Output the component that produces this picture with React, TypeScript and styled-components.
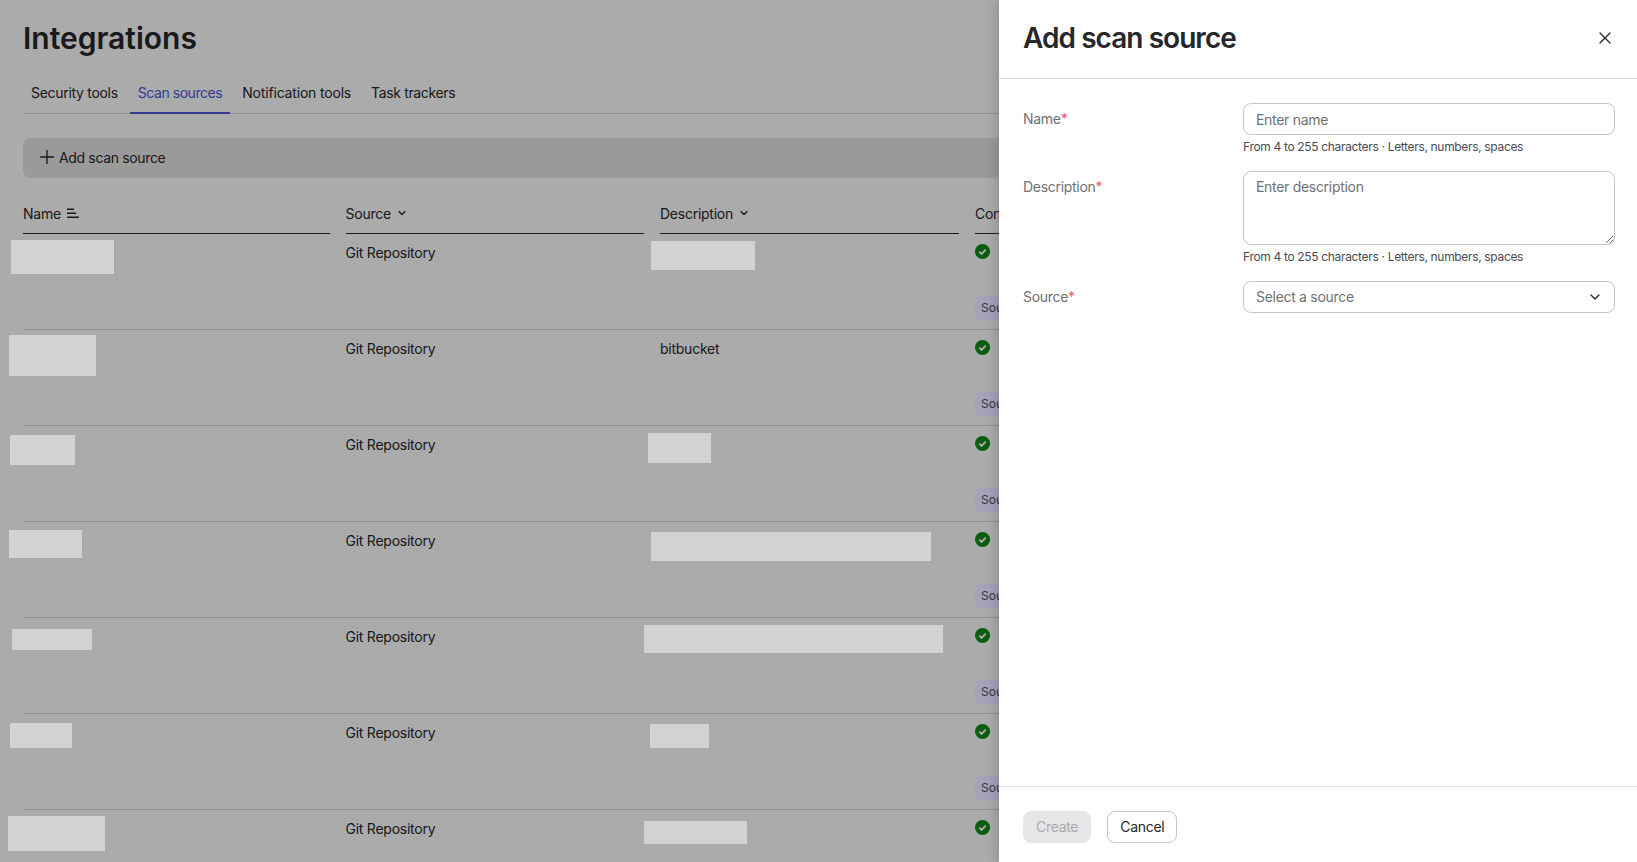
import React from 'react'
import styled, { createGlobalStyle } from 'styled-components'
import { Plus, X, ChevronDown } from 'lucide-react'

const GlobalStyle = createGlobalStyle`
  html, body {
    margin: 0;
    height: 100%;
    overflow: hidden;
    background: #fff;
    font-family: Inter, "Liberation Sans", sans-serif;
    color: #26272b;
  }
  * { box-sizing: border-box; }
`

const Page = styled.div`
  position: relative;
  width: 1637px;
  height: 862px;
  overflow: hidden;
  padding: 16px 0 0 23px;
`

const Backdrop = styled.div`
  position: absolute;
  inset: 0;
  background: rgba(0, 0, 0, 0.33);
  z-index: 2;
`

const PageTitle = styled.h1`
  margin: 0;
  font-size: 30px;
  line-height: 44px;
  font-weight: 600;
  letter-spacing: 0;
  color: #26272b;
`

const Tabs = styled.div`
  display: flex;
  gap: 4px;
  margin-top: 14px;
  height: 40px;
  border-bottom: 1px solid #d8d9dc;
`

const Tab = styled.div<{ $active?: boolean; $tracking: number }>`
  height: 40px;
  padding: 0 8px;
  font-size: 14px;
  line-height: 38px;
  letter-spacing: ${props => props.$tracking}px;
  color: ${props => (props.$active ? '#4a58d8' : '#26272b')};
  border-bottom: 2px solid ${props => (props.$active ? '#4a58d8' : 'transparent')};
`

const Toolbar = styled.div`
  display: flex;
  align-items: center;
  gap: 1.5px;
  margin-top: 24px;
  height: 40px;
  padding: 0 0 2px 12.5px;
  background: #e6e6e7;
  border-radius: 8px 0 0 8px;
  font-size: 14px;
  letter-spacing: -0.35px;
`

const HeaderRow = styled.div`
  display: grid;
  grid-template-columns: 306.5px 298.5px 299px 300px;
  column-gap: 16px;
  margin-top: 16px;
`

const HeaderCell = styled.div`
  display: flex;
  align-items: center;
  gap: 5px;
  height: 40px;
  padding-bottom: 1px;
  font-size: 14px;
  letter-spacing: -0.25px;
  border-bottom: 1px solid #26272b;
`

const Row = styled.div`
  display: grid;
  grid-template-columns: 306.5px 298.5px 299px 300px;
  column-gap: 16px;
  height: 96px;
  border-bottom: 1px solid #d6d7da;
`

const Cell = styled.div`
  position: relative;
  padding-top: 9px;
  font-size: 14px;
  line-height: 20px;
  letter-spacing: -0.25px;
`

const Redaction = styled.div<{ $x: number; $y: number; $w: number; $h: number }>`
  position: absolute;
  left: ${props => props.$x}px;
  top: ${props => props.$y}px;
  width: ${props => props.$w}px;
  height: ${props => props.$h}px;
  background: #d1d2d4;
  z-index: 3;
`

const ConnectionCell = styled.div`
  display: flex;
  flex-direction: column;
  align-items: flex-start;
  padding-top: 10px;
`

const CheckMark = styled.svg`
  display: block;
`

const SortMark = styled.svg`
  display: block;
  margin-left: 1px;
`

const Badge = styled.span`
  position: relative;
  z-index: 3;
  margin-top: 37px;
  height: 24px;
  padding: 0 6px;
  background: #a6a2b8;
  color: #3a3945;
  border-radius: 4px;
  font-size: 12px;
  line-height: 24px;
  white-space: nowrap;
`

const Drawer = styled.aside`
  position: absolute;
  top: 0;
  right: 0;
  bottom: 0;
  width: 638px;
  display: flex;
  flex-direction: column;
  background: #fff;
  box-shadow: -2px 0 12px rgba(0, 0, 0, 0.18);
  z-index: 4;
`

const DrawerHeader = styled.div`
  display: flex;
  align-items: center;
  justify-content: space-between;
  height: 79px;
  padding: 0 22px 2px 24px;
  border-bottom: 1px solid #dcdde0;
`

const DrawerTitle = styled.h2`
  margin: 0;
  font-size: 28px;
  font-weight: 600;
  letter-spacing: -0.95px;
  color: #26272b;
`

const CloseButton = styled.button`
  display: flex;
  padding: 0;
  border: 0;
  background: none;
  color: #26272b;
`

const Form = styled.div`
  flex: 1;
  display: flex;
  flex-direction: column;
  gap: 16px;
  padding: 24px 22px 0 24px;
`

const FormRow = styled.div`
  display: grid;
  grid-template-columns: 220px 1fr;
`

const Label = styled.label`
  padding-top: 6px;
  font-size: 14px;
  line-height: 20px;
  letter-spacing: -0.3px;
  color: #6f7075;
`

const Required = styled.span`
  color: #ec5a62;
`

const fieldStyles = `
  display: block;
  width: 100%;
  border: 1px solid #c4c5c9;
  border-radius: 8px;
  padding: 5px 12px;
  font-family: Inter, "Liberation Sans", sans-serif;
  font-size: 14px;
  line-height: 20px;
  letter-spacing: -0.3px;
  color: #26272b;
  background: #fff;
  outline: none;
  &::placeholder { color: #6f7075; opacity: 1; }
`

const Input = styled.input`
  ${fieldStyles}
  height: 32px;
`

const TextArea = styled.textarea`
  ${fieldStyles}
  height: 74px;
`

const Select = styled.div`
  ${fieldStyles}
  display: flex;
  align-items: center;
  justify-content: space-between;
  height: 32px;
  color: #6f7075;
  padding-right: 11px;
`

const Hint = styled.div`
  margin-top: 4px;
  font-size: 12px;
  line-height: 16px;
  letter-spacing: -0.33px;
  color: #4a4b50;
`

const Footer = styled.div`
  display: flex;
  align-items: center;
  gap: 16px;
  height: 76px;
  padding: 5px 24px 0;
  border-top: 1px solid #dcdde0;
`

const Button = styled.button<{ $disabled?: boolean }>`
  height: 32px;
  padding: 0 12px 2px;
  border-radius: 8px;
  font-family: Inter, "Liberation Sans", sans-serif;
  font-size: 14px;
  letter-spacing: -0.3px;
  border: 1px solid ${props => (props.$disabled ? '#e6e6e9' : '#c4c5c9')};
  background: ${props => (props.$disabled ? '#e6e6e9' : '#fff')};
  color: ${props => (props.$disabled ? '#a9aaae' : '#26272b')};
`

function SortIcon() {
  return (
    <SortMark width="12" height="11" viewBox="0 0 12 11" fill="none" stroke="currentColor" strokeWidth="1.5">
      <path d="M0 1.25h7M0 5.25h9M0 9.25h12" />
    </SortMark>
  )
}

function CheckBadge() {
  return (
    <CheckMark width="15" height="15" viewBox="0 0 15 15">
      <circle cx="7.5" cy="7.5" r="7.5" fill="#0a8a18" />
      <path d="M4.3 7.7l2.3 2.2L10.8 5.6" fill="none" stroke="#fff" strokeWidth="2" />
    </CheckMark>
  )
}

type Box = [number, number, number, number]

const rows: { name: Box; description: Box | string }[] = [
  { name: [-12.5, 6, 103, 34], description: [-9, 7, 104, 29] },
  { name: [-14, 5, 87, 41], description: 'bitbucket' },
  { name: [-13, 9, 65, 30], description: [-12, 7, 63, 30] },
  { name: [-14, 8, 73, 28], description: [-9, 10, 280, 29] },
  { name: [-11.5, 11, 80.5, 21], description: [-16, 7, 299, 28] },
  { name: [-13, 9, 62, 25], description: [-10, 10, 59, 24] },
  { name: [-15, 6, 97, 35], description: [-16, 11, 103, 23] },
]

function Hidden({ box }: { box: Box }) {
  return <Redaction $x={box[0]} $y={box[1]} $w={box[2]} $h={box[3]} />
}

export default function App() {
  return (
    <Page>
      <GlobalStyle />
      <PageTitle>Integrations</PageTitle>
      <Tabs>
        <Tab $tracking={-0.3}>Security tools</Tab>
        <Tab $active $tracking={-0.45}>Scan sources</Tab>
        <Tab $tracking={-0.18}>Notification tools</Tab>
        <Tab $tracking={-0.35}>Task trackers</Tab>
      </Tabs>
      <Toolbar>
        <Plus size={22} strokeWidth={1.5} />
        Add scan source
      </Toolbar>
      <HeaderRow>
        <HeaderCell>Name <SortIcon /></HeaderCell>
        <HeaderCell>Source <ChevronDown size={12} strokeWidth={2.5} /></HeaderCell>
        <HeaderCell>Description <ChevronDown size={12} strokeWidth={2.5} /></HeaderCell>
        <HeaderCell>Connection</HeaderCell>
      </HeaderRow>
      {rows.map((row, index) => (
        <Row key={index}>
          <Cell><Hidden box={row.name} /></Cell>
          <Cell>Git Repository</Cell>
          <Cell>
            {typeof row.description === 'string' ? row.description : <Hidden box={row.description} />}
          </Cell>
          <ConnectionCell>
            <CheckBadge />
            <Badge>Source</Badge>
          </ConnectionCell>
        </Row>
      ))}
      <Backdrop />
      <Drawer>
        <DrawerHeader>
          <DrawerTitle>Add scan source</DrawerTitle>
          <CloseButton><X size={20} strokeWidth={1.5} /></CloseButton>
        </DrawerHeader>
        <Form>
          <FormRow>
            <Label>Name<Required>*</Required></Label>
            <div>
              <Input placeholder="Enter name" />
              <Hint>From 4 to 255 characters · Letters, numbers, spaces</Hint>
            </div>
          </FormRow>
          <FormRow>
            <Label>Description<Required>*</Required></Label>
            <div>
              <TextArea placeholder="Enter description" />
              <Hint>From 4 to 255 characters · Letters, numbers, spaces</Hint>
            </div>
          </FormRow>
          <FormRow>
            <Label>Source<Required>*</Required></Label>
            <Select>Select a source <ChevronDown size={16} color="#26272b" /></Select>
          </FormRow>
        </Form>
        <Footer>
          <Button $disabled>Create</Button>
          <Button>Cancel</Button>
        </Footer>
      </Drawer>
    </Page>
  )
}
